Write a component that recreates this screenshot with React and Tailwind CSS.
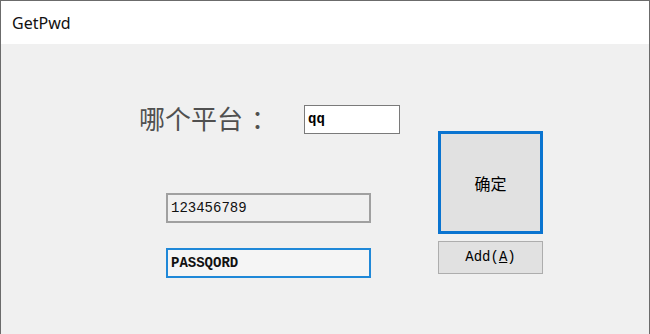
import React from 'react';

const mono = { fontFamily: '"Liberation Mono", "Noto Sans CJK SC", monospace' };

export default function App() {
  return (
    <div className="w-[650px] h-[334px] overflow-hidden border-x border-t border-[#6b6b6b] bg-[#f0f0f0] flex flex-col">
      {/* TITLE BAR */}
      <div className="h-[43px] shrink-0 bg-white flex items-center pl-[11px]">
        <span className="text-[16px] text-[#111]" style={{ fontFamily: '"Noto Sans", "Open Sans", sans-serif' }}>
          GetPwd
        </span>
      </div>

      {/* FORM */}
      <div className="flex-1 flex">
        <div className="w-[437px] shrink-0 flex flex-col">
          <div className="mt-[61px] ml-[138px] flex items-center">
            <span
              className="w-[165px] -mt-[5px] text-[26px] leading-[29px] text-[#505050]"
              style={{ fontFamily: '"Noto Sans CJK SC", sans-serif' }}
            >
              哪个平台<span className="ml-[8px]">：</span>
            </span>
            <div className="w-[96px] h-[29px] border border-[#7a7a7a] bg-white flex items-center px-[3px]">
              <span className="text-[14px] font-bold text-black" style={mono}>qq</span>
            </div>
          </div>

          <div className="mt-[59px] ml-[165px] w-[205px] h-[30px] border-2 border-[#a0a0a0] bg-[#f0f0f0] flex items-center px-[3px]">
            <span className="text-[14px] text-[#111]" style={mono}>123456789</span>
          </div>

          <div className="mt-[25px] ml-[165px] w-[205px] h-[30px] border-2 border-[#1f88d8] bg-[#f5f5f5] flex items-center px-[3px]">
            <span className="text-[14px] font-bold text-[#111]" style={mono}>PASSQORD</span>
          </div>
        </div>

        <div className="flex flex-col">
          <button className="mt-[87px] w-[105px] h-[103px] border-[3px] border-[#0a74d0] bg-[#e1e1e1] flex items-center justify-center">
            <span className="text-[16px] text-black" style={{ fontFamily: '"Noto Sans CJK SC", sans-serif' }}>确定</span>
          </button>
          <button className="mt-[7px] w-[105px] h-[33px] border border-[#adadad] bg-[#e1e1e1] flex items-center justify-center">
            <span className="text-[14px] text-black" style={mono}>
              Add(<span className="underline">A</span>)
            </span>
          </button>
        </div>
      </div>
    </div>
  );
}
